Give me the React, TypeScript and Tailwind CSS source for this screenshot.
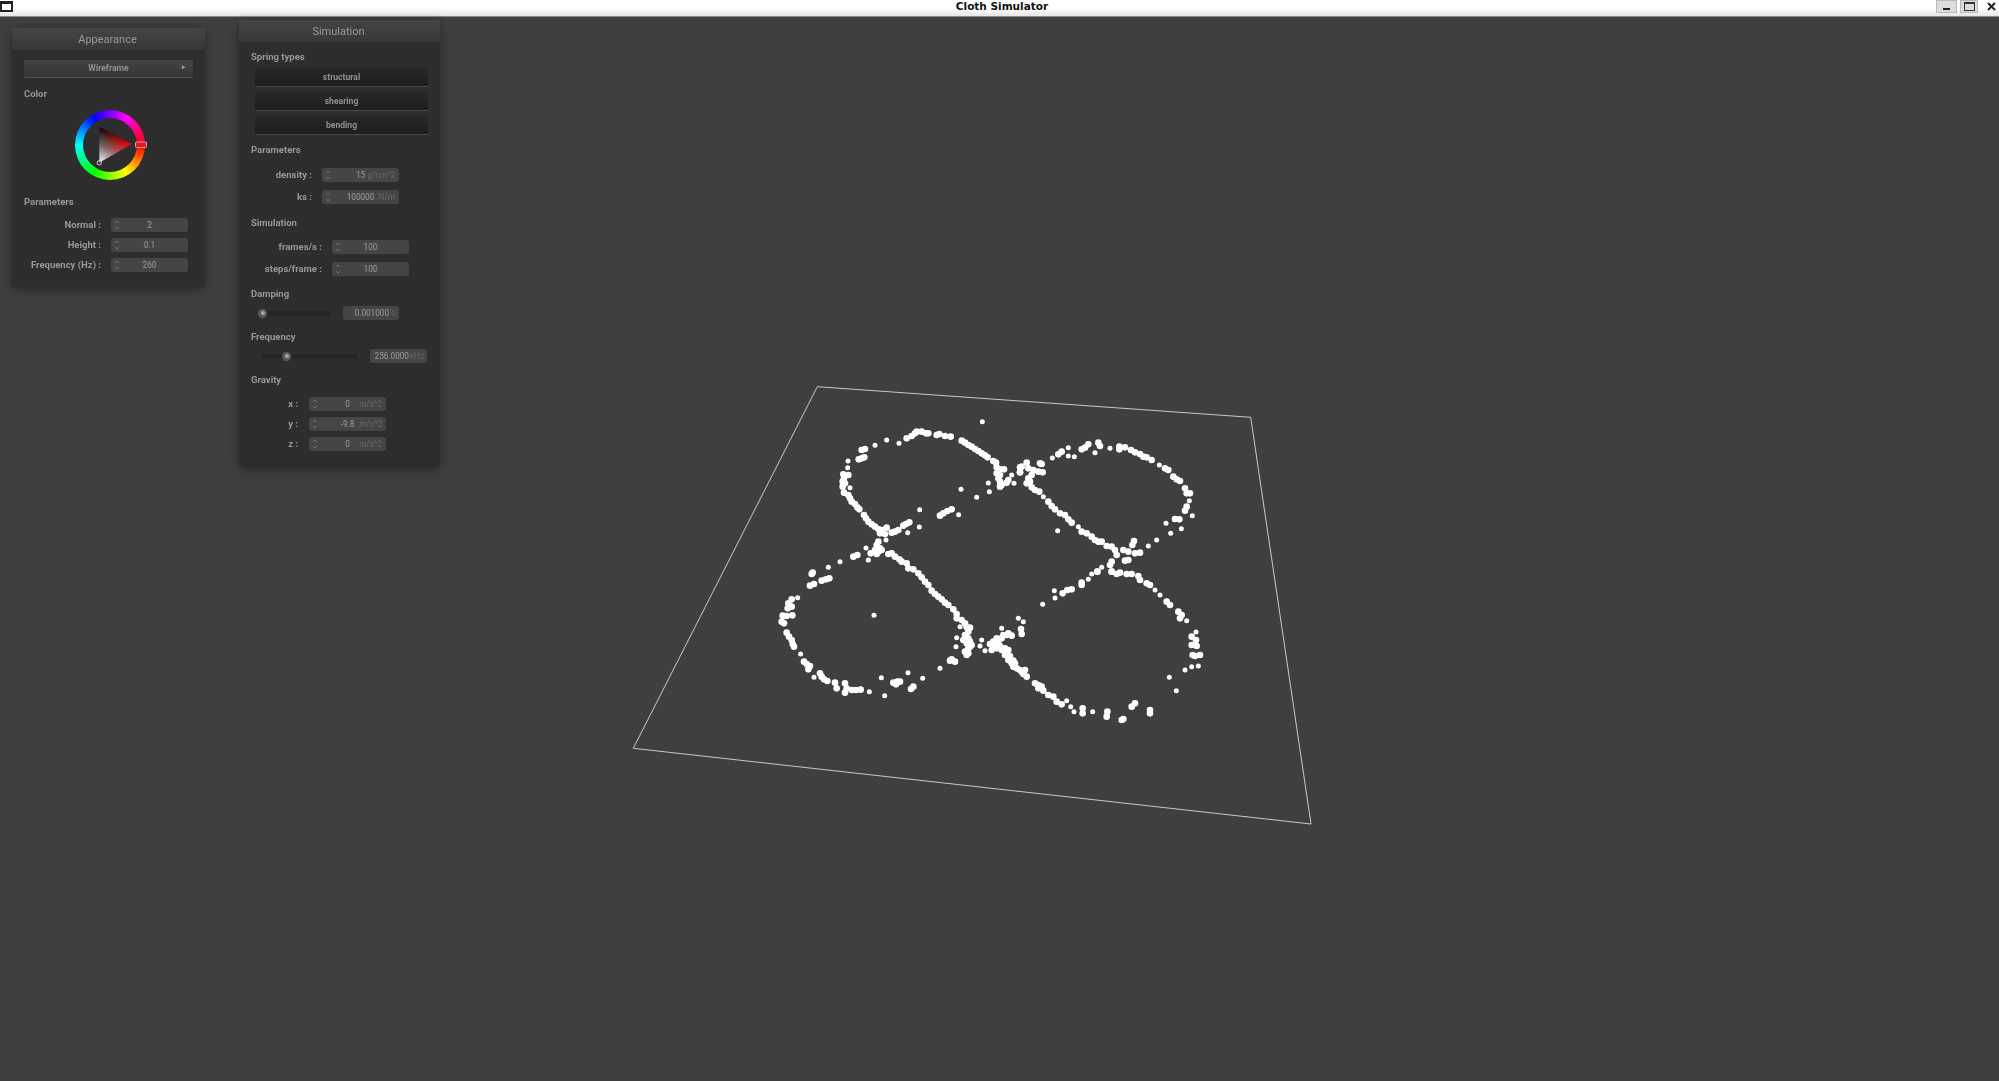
import React from 'react';

type Pt = [number, number];
interface DotGroup {
  ox: number;
  oy: number;
  pts: Pt[];
}

// dot positions read off 3x crops, so each group keeps its crop origin
const dotGroups: DotGroup[] = [
  {
    ox: 620,
    oy: 380,
    pts: [
      [1087,125],[890,155],[885,160],[905,155],[918,160],[925,160],[950,165],[958,162],[975,168],[992,170],[860,175],[875,168],[837,190],[800,180],[765,196],[735,207],[725,210],[733,232],[725,235],[716,238],[684,243],[683,263],
      [670,283],[685,285],[672,295],[668,305],[675,310],[668,320],[690,323],[672,338],[685,345],[690,355],[695,365],[705,372],[712,382],[718,388],[732,405],[738,415],[745,425],[755,433],[765,440],[775,447],[785,450],[800,443],[780,460],[795,462],[815,458],[825,455],[835,450],[850,437],[858,432],[868,427],[863,458],[898,441],[899,389],[960,407],[970,400],[982,393],[995,388],[1016,404],[1070,352],[1108,335],[1023,328],
      [1025,182],[1035,188],[1045,195],[1055,200],[1065,207],[1075,213],[1085,220],[1095,226],[1103,232],[1120,243],[1128,248],[1130,262],[1140,268],[1152,268],[1130,280],[1140,285],[1135,295],[1140,305],[1145,315],[1140,320],[1160,308],[1165,300],[1175,285],[1182,310],[1105,309],[1200,262],[1200,277],
      [775,485],[770,495],[780,505],[765,510],[775,515],[785,510],[770,522],[798,480],[738,504],[752,520],[745,540],[700,530],[712,525],[660,545],[625,562],[575,582],[578,578],[570,617],[582,612],[605,602],[618,598],[628,595],
      [805,522],[815,520],[825,530],[838,538],[845,545],[860,550],[865,565],[880,568],[895,580],[905,592],[915,605],[925,615],[935,632],[945,642],[955,650],[965,658],[975,668],[985,675],[1000,688],
    ],
  },
  {
    ox: 620,
    oy: 540,
    pts: [
      [533,173],[515,178],[505,190],[515,200],[503,205],[488,227],[500,228],[517,226],[485,245],[492,250],[500,278],[507,290],[515,300],[518,312],[522,320],[542,342],[552,365],[560,372],[570,378],[565,388],[582,412],[600,400],[605,410],[612,418],[622,423],[645,428],[650,445],[675,430],[680,445],[675,458],[695,450],[708,450],[722,449],[748,455],[794,467],[784,413],[820,428],[832,425],[840,425],[828,433],[864,398],[880,440],[873,447],[908,415],[960,385],[995,358],[1005,365],[990,362],[762,226],
      [1010,222],[1010,235],[1025,240],[1035,250],[1050,263],[1045,275],[1035,285],[1010,293],[1045,295],[1040,310],[1055,315],[1008,320],[1045,325],[1040,345],[1085,300],[1080,318],[1095,332],
      [1020,260],[1040,262],[1030,300],[1050,305],[1035,335],[1045,340],[1050,320],
    ],
  },
  {
    ox: 950,
    oy: 570,
    pts: [
      [120,222],[125,240],[135,225],[145,215],[155,205],[170,195],[185,197],[150,228],[165,235],[175,240],[165,255],[175,270],[185,280],[190,290],[210,300],[225,300],[220,312],[230,320],[155,175],[205,145],[220,155],[213,177],[215,192],
      [130,215],[140,205],[160,195],[175,190],[140,235],[155,240],[170,248],[180,258],[190,272],[195,280],[200,295],[215,305],
      [255,340],[265,345],[275,350],[265,355],[280,362],[295,375],[310,380],[320,395],[335,403],[350,392],[362,410],[372,425],[398,415],[398,430],[428,425],[472,425],[470,440],[520,447],[515,450],[545,410],[555,400],[600,420],[600,430],[658,322],[679,362],[705,300],[725,290],[745,288],[735,258],[750,255],[728,255],[740,228],[725,225],[725,200],[738,210],[738,186],
      [278,103],[313,62],[315,84],[338,70],[352,60],[365,58],[395,38],[395,45],[415,28],[425,12],[442,5],
      [485,5],[500,12],[510,8],[530,12],[545,12],[565,18],[570,30],[590,40],[600,45],[615,60],[630,75],[650,95],[660,105],[685,125],[695,135],[690,145],[710,152],
    ],
  },
  {
    ox: 1000,
    oy: 380,
    pts: [
      [80,248],[65,260],[85,265],[100,270],[60,277],[120,250],[125,252],[115,275],[128,277],[95,285],[85,295],[80,310],[90,305],[95,322],[105,330],[118,335],[130,350],[145,365],[155,378],[165,388],[180,400],[195,405],[205,418],[215,428],[235,440],[245,455],[260,460],[275,470],[285,480],[295,485],[305,485],[320,498],[335,500],[345,510],[350,525],[370,510],[385,515],[405,520],[420,518],[402,483],[397,495],[335,545],[330,555],[375,542],[385,540],[445,498],[470,480],[512,460],[498,430],[525,417],[538,418],[544,446],[577,407],[560,380],[555,392],[568,362],[555,325],[560,340],[570,340],[520,290],[530,298],[540,303],[495,265],[505,270],[478,255],[455,240],[430,230],[440,232],[420,222],[405,217],[393,210],[375,202],[358,200],[358,208],[330,205],[295,188],[300,198],[285,218],[265,193],[255,203],[245,208],[205,203],[205,228],[223,230],[185,215],[175,223],[157,234],[173,452],
      [305,562],[292,575],[335,575],
    ],
  },
];

const dots: Pt[] = dotGroups.flatMap((g) => g.pts.map(([x, y]): Pt => [g.ox + x / 3, g.oy + y / 3]));

// dots sitting in a clump render fatter than lone ones
const dotRadius = ([x, y]: Pt) => {
  const near = dots.filter(([a, b]) => Math.hypot(a - x, b - y) < 6).length;
  return near > 1 ? 3.3 : 2.5;
};

const ClothView = () => (
  <svg className="absolute left-0 top-[-17px]" width={1999} height={1081} viewBox="0 0 1999 1081">
    <polygon points="817.3,386.7 1250.7,417.3 1311,824 633.3,748.3" fill="none" stroke="#c8c8c8" strokeWidth={1} />
    {dots.map((p, i) => (
      <circle key={i} cx={p[0]} cy={p[1]} r={dotRadius(p)} fill="#fff" />
    ))}
  </svg>
);

const Spinner = () => (
  <svg className="absolute left-[3px] top-[2px]" width={6} height={10} viewBox="0 0 6 10" fill="none" stroke="#7a7a7a" strokeWidth={0.8}>
    <path d="M1 3 L3 1 L5 3" />
    <path d="M1 7 L3 9 L5 7" />
  </svg>
);

const NumberBox = ({ value, unit }: { value: string; unit?: string }) => (
  <div className="relative w-[77px] h-[14px] rounded-[3px] bg-[#454545] text-center text-[8.2px] leading-[14px] text-[#9a9a9a]">
    <Spinner />
    {value}
    {unit && <span className="absolute right-[4px] top-0 text-[#666]">{unit}</span>}
  </div>
);

const GroupLabel = ({ children, className }: { children: React.ReactNode; className?: string }) => (
  <div className={`h-[14px] text-[9.5px] leading-[14px] font-bold text-[#979797] ${className ?? ''}`}>{children}</div>
);

const Row = ({ label, labelClass, value, unit, className }: { label: string; labelClass: string; value: string; unit?: string; className?: string }) => (
  <div className={`flex items-center ${className ?? ''}`}>
    <span className={`text-right text-[9.5px] font-bold text-[#979797] whitespace-nowrap ${labelClass}`}>{label}</span>
    <NumberBox value={value} unit={unit} />
  </div>
);

const PanelHeader = ({ title }: { title: string }) => (
  <div className="h-[22px] pr-[2px] bg-gradient-to-b from-[#444] to-[#373737] text-center text-[11px] leading-[24px] text-[#999]">{title}</div>
);

const ColorWheel = () => (
  <div className="relative w-[70px] h-[70px] rounded-full bg-[conic-gradient(from_90deg,#f00,#ff0,#0f0,#0ff,#00f,#f0f,#f00)]">
    <div className="absolute left-[8px] top-[8px] w-[54px] h-[54px] rounded-full bg-[#2d2d2d]" />
    <svg className="absolute left-0 top-0 overflow-visible" width={70} height={70} viewBox="0 0 70 70">
      <defs>
        <linearGradient id="redFade" gradientUnits="userSpaceOnUse" x1={56.7} y1={34} x2={24.3} y2={34}>
          <stop offset="0" stopColor="#f00" />
          <stop offset="1" stopColor="#f00" stopOpacity={0} />
        </linearGradient>
        <linearGradient id="whiteFade" gradientUnits="userSpaceOnUse" x1={24.3} y1={52.7} x2={40.5} y2={25.4}>
          <stop offset="0" stopColor="#fff" />
          <stop offset="0.5" stopColor="#fff" stopOpacity={0.4} />
          <stop offset="1" stopColor="#fff" stopOpacity={0} />
        </linearGradient>
      </defs>
      <polygon points="24.3,16.7 56.7,34 24.3,52.7" fill="#000" />
      <polygon points="24.3,16.7 56.7,34 24.3,52.7" fill="url(#redFade)" className="mix-blend-screen" />
      <polygon points="24.3,16.7 56.7,34 24.3,52.7" fill="url(#whiteFade)" className="mix-blend-screen" />
      <circle cx={24.3} cy={52.7} r={2.2} fill="none" stroke="#ccc" strokeWidth={1} />
      <rect x={60.5} y={32} width={11} height={5.5} rx={1} fill="#f0141e" stroke="#c8a8a8" strokeWidth={1} />
    </svg>
  </div>
);

const AppearancePanel = () => (
  <div className="absolute left-[12px] top-[11px] w-[193px] h-[259px] bg-[#2d2d2d] shadow-[0_2px_10px_rgba(0,0,0,0.4)] blur-[0.5px]">
    <PanelHeader title="Appearance" />
    <div className="px-[12px]">
      <div className="relative mt-[10px] h-[18px] rounded-[2px] border-b border-[#555] bg-gradient-to-b from-[#444] to-[#353535] text-center text-[8.6px] leading-[17px] font-bold text-[#8f8f8f]">
        Wireframe
        <span className="absolute right-[7px] top-[-1px] text-[7px] text-[#999]">▸</span>
      </div>
      <GroupLabel className="mt-[9px]">Color</GroupLabel>
      <div className="mt-[9px] flex justify-center pl-[3px]">
        <ColorWheel />
      </div>
      <GroupLabel className="mt-[15px]">Parameters</GroupLabel>
      <div className="mt-[9px] flex flex-col gap-[5.5px]">
        <Row label="Normal :" labelClass="w-[77px] mr-[10px]" value="2" />
        <Row label="Height :" labelClass="w-[77px] mr-[10px]" value="0.1" />
        <Row label="Frequency (Hz) :" labelClass="w-[77px] mr-[10px]" value="260" />
      </div>
    </div>
  </div>
);

const SpringButton = ({ label }: { label: string }) => (
  <div className="h-[19px] rounded-[2px] border-b border-[#484848] bg-gradient-to-b from-[#292929] to-[#1c1c1c] text-center text-[8.6px] leading-[18px] font-bold text-[#8f8f8f]">
    {label}
  </div>
);

const SliderRow = ({ trackClass, thumbClass, boxClass, value, unit }: { trackClass: string; thumbClass: string; boxClass: string; value: string; unit: string }) => (
  <div className="flex items-center">
    <div className={`relative h-[5px] rounded-full bg-[#252525] ${trackClass}`}>
      <div className={`absolute top-[-2px] w-[9px] h-[9px] rounded-full bg-[#5a5a5a] flex items-center justify-center ${thumbClass}`}>
        <div className="w-[4px] h-[4px] rounded-full bg-[#a8a8a8]" />
      </div>
    </div>
    <div className={`flex justify-end gap-[1px] h-[14px] rounded-[3px] bg-[#454545] pr-[3px] text-[8.2px] leading-[14px] text-[#9a9a9a] ${boxClass}`}>
      {value}
      <span className="text-[#666]">{unit}</span>
    </div>
  </div>
);

const SimulationPanel = () => (
  <div className="absolute left-[239px] top-[3px] w-[201px] h-[447px] bg-[#2d2d2d] shadow-[0_2px_10px_rgba(0,0,0,0.4)] blur-[0.5px]">
    <PanelHeader title="Simulation" />
    <div className="pl-[12px]">
      <GroupLabel className="mt-[8px]">Spring types</GroupLabel>
      <div className="mt-[4px] ml-[4px] w-[173px] flex flex-col gap-[5px]">
        <SpringButton label="structural" />
        <SpringButton label="shearing" />
        <SpringButton label="bending" />
      </div>
      <GroupLabel className="mt-[8px]">Parameters</GroupLabel>
      <div className="mt-[11px] flex flex-col gap-[8px]">
        <Row label="density :" labelClass="w-[61px] mr-[10px]" value="15" unit="g/cm^2" />
        <Row label="ks :" labelClass="w-[61px] mr-[10px]" value="100000" unit="N/m" />
      </div>
      <GroupLabel className="mt-[11px]">Simulation</GroupLabel>
      <div className="mt-[10px] flex flex-col gap-[8px]">
        <Row label="frames/s :" labelClass="w-[71px] mr-[10px]" value="100" />
        <Row label="steps/frame :" labelClass="w-[71px] mr-[10px]" value="100" />
      </div>
      <GroupLabel className="mt-[11px]">Damping</GroupLabel>
      <div className="mt-[5px] ml-[8px]">
        <SliderRow trackClass="w-[71px] mr-[13px]" thumbClass="left-[-1px]" boxClass="w-[56px]" value="0.001000" unit="%" />
      </div>
      <GroupLabel className="mt-[10px]">Frequency</GroupLabel>
      <div className="mt-[5px] ml-[11px]">
        <SliderRow trackClass="w-[96px] mr-[12px]" thumbClass="left-[20px]" boxClass="w-[57px]" value="256.0000" unit="kHz" />
      </div>
      <GroupLabel className="mt-[10px]">Gravity</GroupLabel>
      <div className="mt-[10px] flex flex-col gap-[5.5px]">
        <Row label="x :" labelClass="w-[47px] mr-[11px]" value="0" unit="m/s^2" />
        <Row label="y :" labelClass="w-[47px] mr-[11px]" value="-9.8" unit="m/s^2" />
        <Row label="z :" labelClass="w-[47px] mr-[11px]" value="0" unit="m/s^2" />
      </div>
    </div>
  </div>
);

const TitleBar = () => (
  <div className="relative flex h-[17px] shrink-0 items-start justify-between border-b border-[#8c8c8c] bg-gradient-to-b from-white via-white to-[#e6e6e6]">
    <div className="mt-[1px] h-[11px] w-[13px] border-2 border-t-[3px] border-[#222] bg-white" />
    <div className="absolute inset-x-0 top-[-1px] pl-[5px] text-center text-[10.5px] leading-[14px] font-bold text-[#111] font-['DejaVu_Sans',sans-serif]">
      Cloth Simulator
    </div>
    <div className="flex">
      <div className="flex h-[13px] w-[21px] items-end justify-center border border-[#bbb] bg-[#dcdcdc] pb-[2px]">
        <div className="h-[2px] w-[7px] bg-[#222]" />
      </div>
      <div className="ml-[3px] flex h-[13px] w-[18px] items-center justify-center border border-[#bbb] bg-[#dcdcdc]">
        <div className="h-[9px] w-[11px] border border-t-2 border-[#333]" />
      </div>
      <div className="ml-[6px] flex h-[13px] w-[15px] items-center justify-center">
        <svg width={9} height={9} viewBox="0 0 9 9" fill="none" stroke="#222" strokeWidth={2}>
          <path d="M1 1 L8 8 M8 1 L1 8" />
        </svg>
      </div>
    </div>
  </div>
);

export default function App() {
  return (
    <div className="flex h-[1081px] w-[1999px] flex-col overflow-hidden bg-[#3f3f3f] font-['Roboto',sans-serif]">
      <TitleBar />
      <div className="relative flex-1">
        <ClothView />
        <AppearancePanel />
        <SimulationPanel />
      </div>
    </div>
  );
}
